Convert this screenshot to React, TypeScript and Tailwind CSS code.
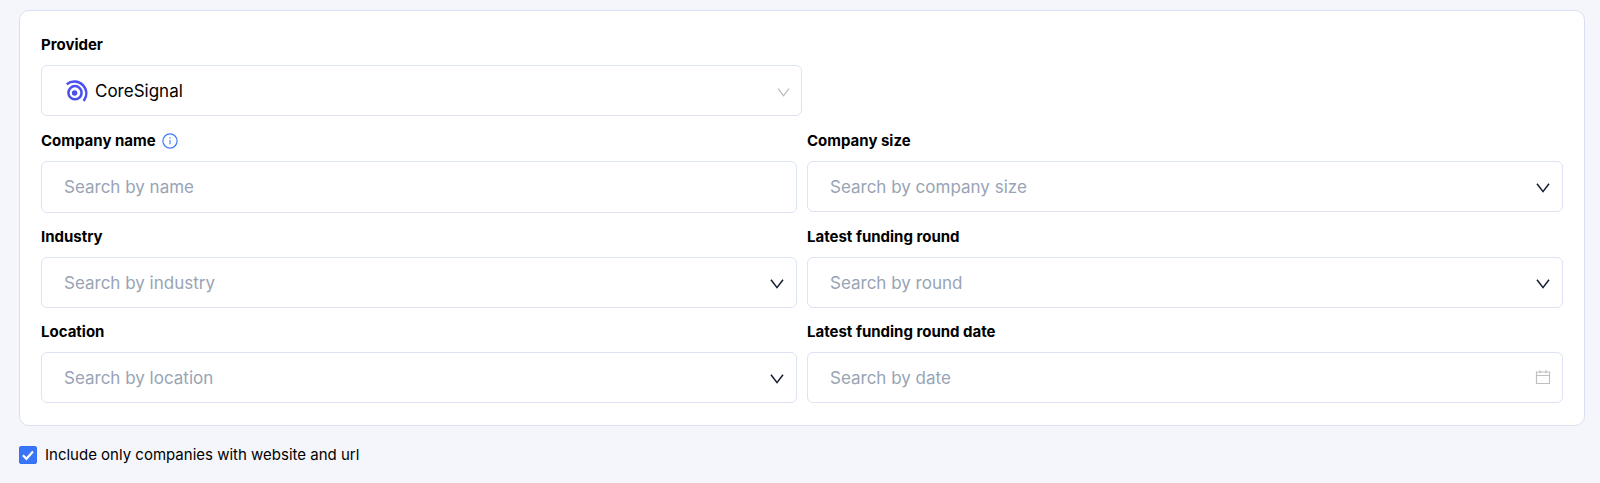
import { useState } from "react";
import type { ReactNode } from "react";
import clsx from "clsx";

const boxClass =
  "block w-full appearance-none rounded-md border border-[#dde3f5] bg-white pr-12 text-[17px] leading-6 outline-none focus:border-[#3370f6]";

const Chevron = ({ className }: { className?: string }) => (
  <svg viewBox="0 0 14 10" fill="none" stroke="currentColor" className={clsx("pointer-events-none absolute", className)}>
    <path d="M1 0.8 7 8.6 13 0.8" />
  </svg>
);

const CoreSignalLogo = () => (
  <svg
    viewBox="0 0 24 24"
    fill="none"
    stroke="#4a50ee"
    strokeWidth="2.5"
    className="pointer-events-none absolute left-6 top-[14px] size-6"
  >
    <circle cx="10" cy="13.7" r="6.6" />
    <circle cx="9.6" cy="14" r="2.7" fill="#4a50ee" stroke="none" />
    <path d="M1.8 5.2C6.6 1.4 13.6 1.7 17.9 6.2c4.3 4.6 4.6 10.6 0.8 15.8" />
  </svg>
);

const InfoIcon = () => (
  <svg viewBox="0 0 16 16" fill="none" stroke="#3f7df8" className="size-4">
    <circle cx="8" cy="8" r="7.1" strokeWidth="1.2" />
    <path d="M8 6.9v4.3" strokeWidth="1.1" />
    <circle cx="8" cy="4.9" r="0.75" fill="#3f7df8" stroke="none" />
  </svg>
);

const CalendarIcon = () => (
  <svg
    viewBox="0 0 16 16"
    fill="none"
    stroke="#bfbfbf"
    strokeWidth="1.2"
    className="pointer-events-none absolute right-3 top-[17px] size-4"
  >
    <path d="M1.5 3h13v11.5h-13zM1.5 6.5h13M5 1.2v3.3M11 1.2v3.3" />
  </svg>
);

type FieldProps = {
  id: string;
  label: string;
  hint?: ReactNode;
  children: ReactNode;
};

const Field = ({ id, label, hint, children }: FieldProps) => (
  <div>
    <div className="mb-2 flex items-center gap-1.5">
      <label htmlFor={id} className="text-[15px] font-bold leading-6 text-black">
        {label}
      </label>
      {hint}
    </div>
    <div className="relative">{children}</div>
  </div>
);

const SearchSelect = ({ id, placeholder }: { id: string; placeholder: string }) => (
  <>
    <select id={id} defaultValue="" className={clsx(boxClass, "h-[51px] pl-[22px] text-[#98a4b5]")}>
      <option value="">{placeholder}</option>
    </select>
    <Chevron className="right-[13px] top-[22px] h-[10px] w-[14px] stroke-[1.5] text-[#0f1b2d]" />
  </>
);

export default function App() {
  const [onlyWithUrl, setOnlyWithUrl] = useState(true);

  return (
    <main className="min-h-screen bg-[#f5f6fb] pt-[10px] pr-[15px] pb-5 pl-[19px] font-['Inter',sans-serif] text-black">
      <form>
        <section className="rounded-[10px] border border-[#d9e0f4] bg-white px-[21px] py-[22px]">
          <div className="mb-[13px] w-1/2">
            <Field id="provider" label="Provider">
              <select id="provider" className={clsx(boxClass, "h-[51px] pl-[53px] text-black")}>
                <option>CoreSignal</option>
              </select>
              <CoreSignalLogo />
              <Chevron className="right-3 top-[23px] h-[9px] w-[13px] stroke-[1.3] text-[#b8b8b8]" />
            </Field>
          </div>

          <div className="grid grid-cols-2 items-start gap-x-[10px] gap-y-3">
            <Field id="name" label="Company name" hint={<InfoIcon />}>
              <input
                id="name"
                type="text"
                placeholder="Search by name"
                className={clsx(boxClass, "h-[52px] pl-[22px] placeholder:text-[#98a4b5]")}
              />
            </Field>
            <Field id="size" label="Company size">
              <SearchSelect id="size" placeholder="Search by company size" />
            </Field>
            <Field id="industry" label="Industry">
              <SearchSelect id="industry" placeholder="Search by industry" />
            </Field>
            <Field id="round" label="Latest funding round">
              <SearchSelect id="round" placeholder="Search by round" />
            </Field>
            <Field id="location" label="Location">
              <SearchSelect id="location" placeholder="Search by location" />
            </Field>
            <Field id="date" label="Latest funding round date">
              <input
                id="date"
                type="text"
                placeholder="Search by date"
                className={clsx(boxClass, "h-[51px] pl-[22px] placeholder:text-[#98a4b5]")}
              />
              <CalendarIcon />
            </Field>
          </div>
        </section>

        <label className="mt-[17px] flex w-fit items-center gap-2 text-[15px] leading-6">
          <span className="relative size-[18px]">
            <input
              type="checkbox"
              checked={onlyWithUrl}
              onChange={(e) => setOnlyWithUrl(e.target.checked)}
              className="block size-[18px] appearance-none rounded-xs border border-[#3370f6] bg-white checked:bg-[#3875f7]"
            />
            <svg
              viewBox="0 0 18 18"
              fill="none"
              stroke="white"
              strokeWidth="2.2"
              className="pointer-events-none absolute inset-0 size-[18px]"
            >
              <path d="M3.9 9.3 7.4 12.8 14 5.6" />
            </svg>
          </span>
          Include only companies with website and url
        </label>
      </form>
    </main>
  );
}
